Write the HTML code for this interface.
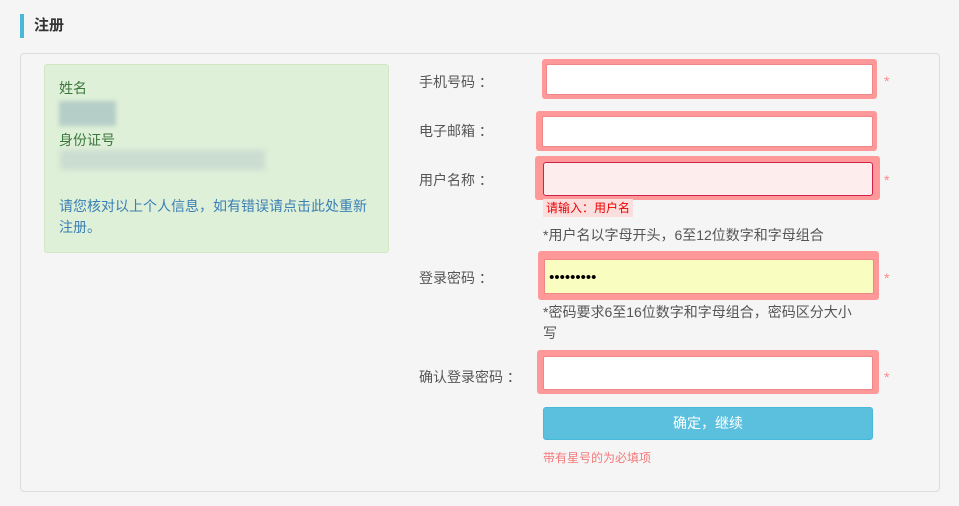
<!DOCTYPE html>
<html><head><meta charset="utf-8"><style>
body{margin:0;background:#f5f5f5;font-family:"Liberation Sans","Noto Sans CJK SC",sans-serif;font-size:14px;color:#555;width:959px;height:506px;position:relative;overflow:hidden}
.a{position:absolute}
.title{left:20px;top:14px;height:24px;border-left:4px solid #4bb8d8;padding-left:10px;line-height:24px;font-size:15px;font-weight:bold;color:#333}
.panel{left:20px;top:53px;width:918px;height:437px;border:1px solid #ddd;border-radius:4px;background:#f5f5f5}
.info{left:44px;top:64px;width:343px;height:187px;background:#dff0d8;border:1px solid #d0e6c4;border-radius:3px}
.lbl{color:#555;font-size:14px;line-height:20px}
.pk{background:#f99;border-radius:3px}
.in{background:#fff;border:1px solid #e88}
.star{color:#f88;font-size:14px}
</style></head><body>
<div class="a title">注册</div>
<div class="a panel"></div>
<div class="a info"></div>
<div class="a" style="left:59px;top:78px;color:#3c763d">姓名</div>
<div class="a" style="left:59px;top:101px;width:57px;height:25px;background:#b5cec8;filter:blur(2px)"></div>
<div class="a" style="left:59px;top:130px;color:#3c763d">身份证号</div>
<div class="a" style="left:60px;top:150px;width:205px;height:20px;background:#cbdcd0;filter:blur(3px)"></div>
<div class="a" style="left:59px;top:196px;width:314px;line-height:21px;color:#3a7fb5">请您核对以上个人信息，如有错误请点击此处重新注册。</div>

<div class="a lbl" style="left:419px;top:72px">手机号码 ：</div>
<div class="a pk" style="left:542px;top:59px;width:335px;height:40px"></div>
<div class="a in" style="left:546px;top:64px;width:325px;height:29px;border-radius:2px"></div>
<div class="a star" style="left:884px;top:73px">*</div>

<div class="a lbl" style="left:419px;top:121px">电子邮箱 ：</div>
<div class="a pk" style="left:536px;top:111px;width:341px;height:40px"></div>
<div class="a in" style="left:542px;top:116px;width:329px;height:29px;border-radius:2px"></div>

<div class="a lbl" style="left:419px;top:170px">用户名称 ：</div>
<div class="a pk" style="left:535px;top:156px;width:345px;height:44px"></div>
<div class="a" style="left:543px;top:162px;width:328px;height:32px;background:#fdeded;border:1px solid #d1204a;border-radius:3px"></div>
<div class="a star" style="left:884px;top:172px">*</div>
<div class="a" style="left:543px;top:199px;width:87px;height:18px;background:#fbdede;color:#e00;font-size:12px;line-height:18px;padding-left:3px">请输入：用户名</div>
<div class="a" style="left:543px;top:225px;color:#555">*用户名以字母开头，6至12位数字和字母组合</div>

<div class="a lbl" style="left:419px;top:268px">登录密码 ：</div>
<div class="a pk" style="left:538px;top:251px;width:341px;height:49px"></div>
<div class="a" style="left:544px;top:259px;width:330px;height:35px;background:#fafdc0;border:1px solid #e88;border-radius:2px;color:#000;font-size:15px;line-height:35px;box-sizing:border-box">&nbsp;•••••••••</div>
<div class="a star" style="left:884px;top:270px">*</div>
<div class="a" style="left:543px;top:302px;width:315px;line-height:21px">*密码要求6至16位数字和字母组合，密码区分大小写</div>

<div class="a lbl" style="left:419px;top:367px">确认登录密码 ：</div>
<div class="a pk" style="left:537px;top:350px;width:342px;height:44px"></div>
<div class="a in" style="left:543px;top:356px;width:328px;height:32px;border-radius:2px"></div>
<div class="a star" style="left:884px;top:369px">*</div>

<div class="a" style="left:543px;top:407px;width:330px;height:33px;background:#5bc0de;border:1px solid #46b8da;border-radius:3px;color:#fff;text-align:center;line-height:31px;box-sizing:border-box">确定，继续</div>
<div class="a" style="left:543px;top:449px;color:#f47a7a;font-size:12px">带有星号的为必填项</div>
</body></html>
